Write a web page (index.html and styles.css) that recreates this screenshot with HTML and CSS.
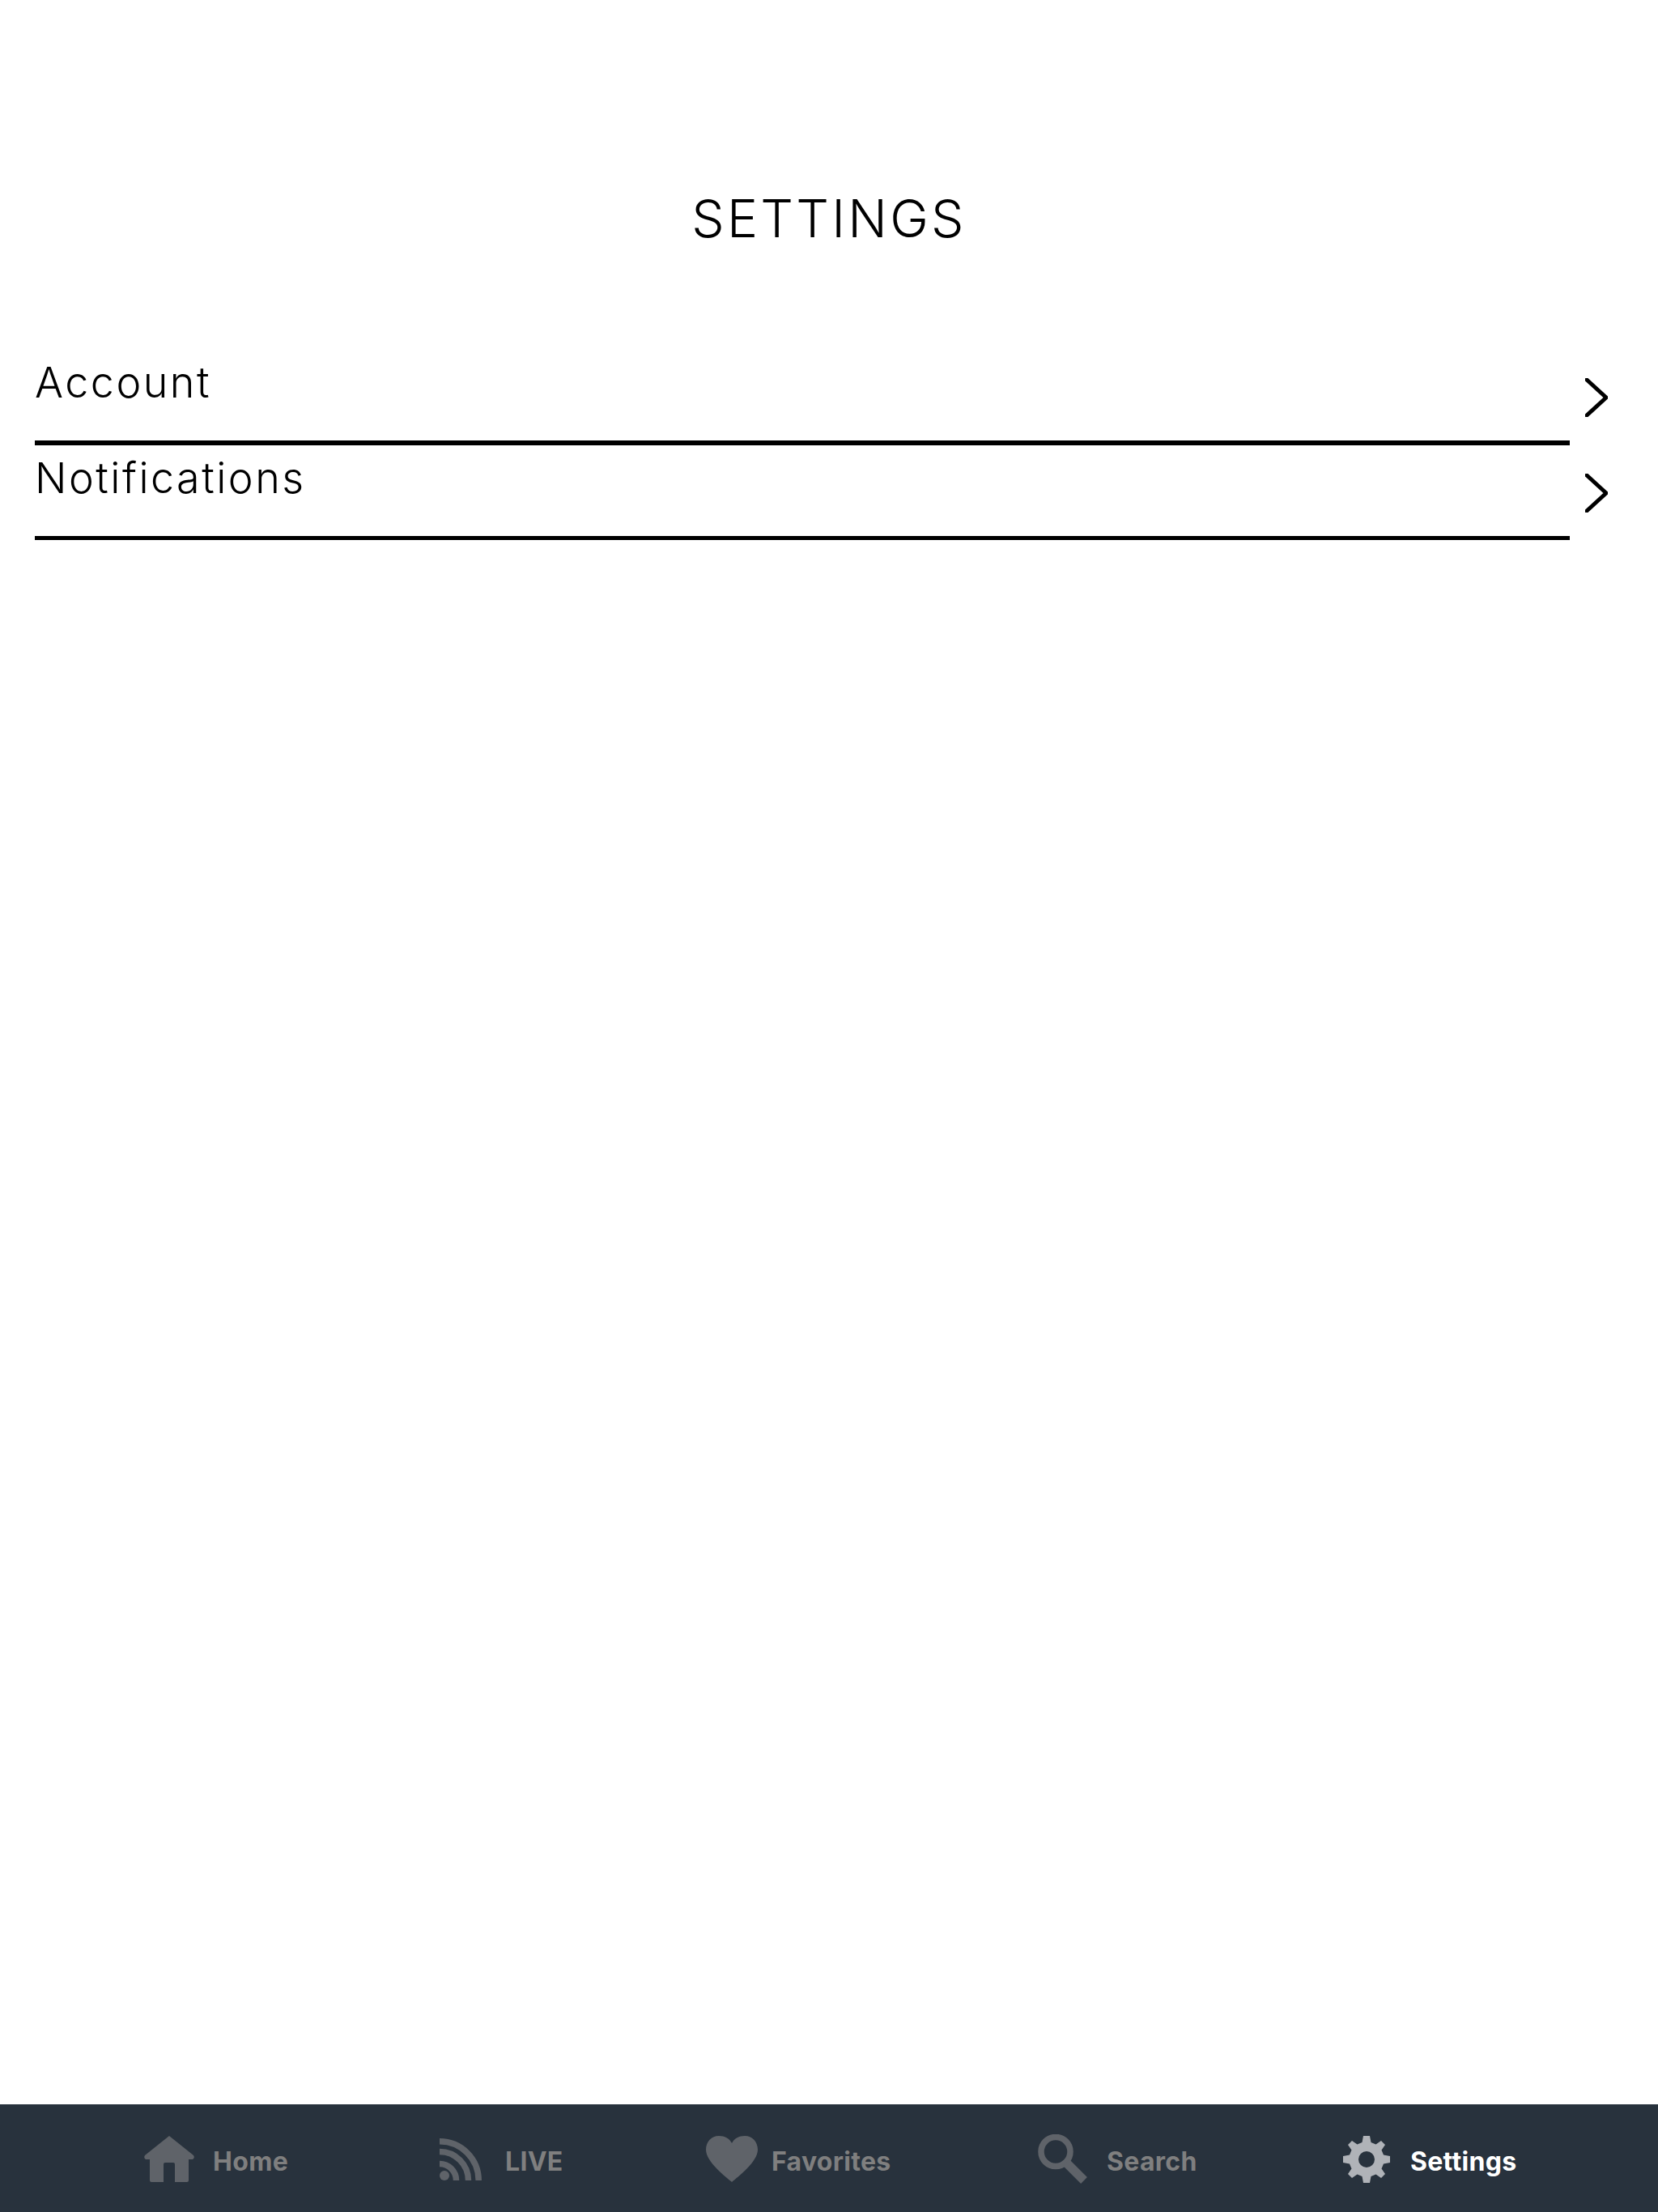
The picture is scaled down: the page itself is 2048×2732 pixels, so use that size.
FILE: index.html
```html
<!DOCTYPE html>
<html lang="en">
<head>
<meta charset="utf-8">
<title>Settings</title>
<link rel="stylesheet" href="styles.css">
</head>
<body>
<div class="page">
  <main class="content">
    <h1 class="title">SETTINGS</h1>
    <ul class="menu">
      <li class="menu-row">
        <span class="menu-label">Account</span>
        <svg class="chevron" viewBox="0 0 28 48"><path d="M2 2L26 24L2 46"/></svg>
      </li>
      <li class="menu-row menu-row-last">
        <span class="menu-label">Notifications</span>
        <svg class="chevron" viewBox="0 0 28 48"><path d="M2 2L26 24L2 46"/></svg>
      </li>
    </ul>
  </main>
  <nav class="tabbar">
    <a class="tab">
      <svg class="tab-icon icon-home" viewBox="0 0 62 57"><path d="M31 0L61 24Q63 27 60 29H55V55Q55 57 53 57H38V35Q38 33 36 33H26Q24 33 24 35V57H9Q7 57 7 55V29H2Q-1 27 1 24Z"/></svg>
      <span class="tab-label">Home</span>
    </a>
    <a class="tab">
      <svg class="tab-icon icon-live" viewBox="0 0 52 52"><circle cx="6" cy="46" r="6"/><path class="arc" d="M0 31.5A20.5 20.5 0 0 1 20.5 52M0 16.500A35.500 35.500 0 0 1 35.500 52M0 3.800A48.200 48.200 0 0 1 48.200 52"/></svg>
      <span class="tab-label">LIVE</span>
    </a>
    <a class="tab">
      <svg class="tab-icon icon-heart" viewBox="0 0 64 57"><path d="M32 57C24 50 0 32 0 17C0 7 7 0 16 0C23 0 29 3 32 9C35 3 41 0 48 0C57 0 64 7 64 17C64 32 40 50 32 57Z"/></svg>
      <span class="tab-label">Favorites</span>
    </a>
    <a class="tab">
      <svg class="tab-icon icon-search" viewBox="0 0 62 61"><circle class="ring" cx="22" cy="21.500" r="18"/><path class="handle" d="M35 35L57 57"/></svg>
      <span class="tab-label">Search</span>
    </a>
    <a class="tab tab-active">
      <svg class="tab-icon icon-gear" viewBox="-29 -29 58 58"><path fill-rule="evenodd" d="M-4 -29H4L5.500 -21L11.500 -18.500L18 -23L23 -18L18.500 -11.500L21 -5.500L29 -4V4L21 5.500L18.500 11.500L23 18L18 23L11.500 18.500L5.500 21L4 29H-4L-5.500 21L-11.500 18.500L-18 23L-23 18L-18.500 11.500L-21 5.500L-29 4V-4L-21 -5.500L-18.500 -11.500L-23 -18L-18 -23L-11.500 -18.500L-5.500 -21ZM0 -10A10 10 0 1 0 0 10A10 10 0 1 0 0 -10Z"/></svg>
      <span class="tab-label">Settings</span>
    </a>
  </nav>
</div>
</body>
</html>
```
FILE: styles.css
```css
* { box-sizing: border-box; }
html, body { margin: 0; padding: 0; background: #fff; }
body { font-family: Inter, "Liberation Sans", sans-serif; color: #000; }
.page { display: flex; flex-direction: column; height: 2732px; }
.content { flex: 1; padding: 224px 0 0 43px; }
.title {
  margin: 0 0 0 -43px;
  height: 208px;
  font-size: 64px;
  line-height: 92px;
  font-weight: 350;
  letter-spacing: 3.300px;
  text-align: center;
}
.menu { list-style: none; margin: 0; padding: 0; }
.menu-row { display: flex; align-items: flex-start; height: 118px; }
.menu-label {
  width: 1896px;
  height: 118px;
  padding-top: 9px;
  border-bottom: 6px solid #000;
  font-size: 52px;
  line-height: 64px;
  font-weight: 350;
  letter-spacing: 2.500px;
}
.menu-row-last .menu-label { border-bottom-width: 5px; height: 117px; }
.chevron {
  width: 28px;
  height: 48px;
  margin: 35px 0 0 19px;
  fill: none;
  stroke: #000;
  stroke-width: 5;
  stroke-linecap: round;
}
.tabbar {
  display: grid;
  grid-template-columns: 365px 329px 410px 377px 1fr;
  align-items: center;
  height: 133px;
  padding: 2px 0 0 178px;
  background: #28323d;
}
.tab { display: flex; align-items: center; text-decoration: none; }
.tab-icon { flex: none; fill: #5f6369; }
.tab-label {
  padding-top: 6px;
  font-size: 32px;
  line-height: 40px;
  font-weight: 700;
  letter-spacing: 0.300px;
  color: #7f7f7f;
}
.icon-home { width: 62px; height: 57px; margin-right: 23px; }
.icon-live { width: 52px; height: 52px; margin-right: 29px; }
.icon-heart { width: 64px; height: 57px; margin-right: 17px; }
.icon-search { width: 62px; height: 61px; margin-right: 23px; }
.icon-gear { width: 58px; height: 58px; margin-right: 25px; }
.arc, .ring { fill: none; stroke: #5f6369; stroke-width: 7.500; }
.handle { fill: none; stroke: #5f6369; stroke-width: 11; }
.tab-active .tab-icon { fill: #b0b3b8; }
.tab-active .tab-label { color: #fff; }
```
